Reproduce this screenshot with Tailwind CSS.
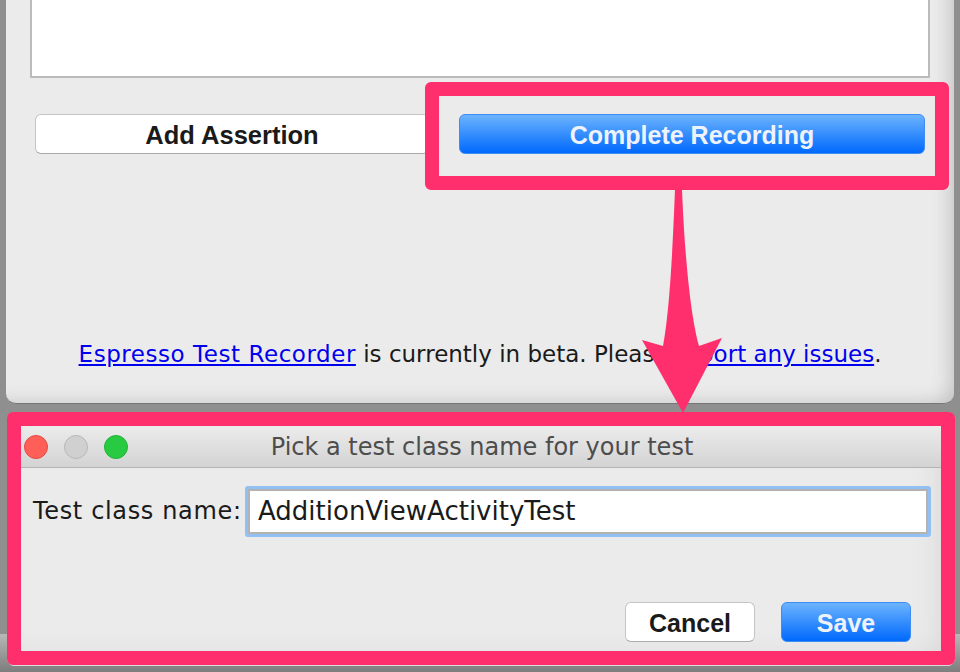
<!DOCTYPE html>
<html>
<head>
<meta charset="utf-8">
<script src="https://cdn.jsdelivr.net/npm/@tailwindcss/browser@4"></script>
</head>
<body class="m-0">
<div class="relative w-[960px] h-[672px] overflow-hidden bg-[linear-gradient(to_bottom,#8f8f8f_0,#8f8f8f_634px,#b8b8b8_634px,#7d7d7d_672px)] font-['DejaVu_Sans',sans-serif] text-[#1a1a1a]">
  <!-- back window -->
  <div class="absolute left-[6px] top-0 w-[948px] h-[404px] bg-[#ebebeb] rounded-b-[10px] border-b border-[#777] flex flex-col px-[24px] shadow-[inset_-14px_-10px_18px_-10px_#c4c4c4]">
    <div class="h-[78px] bg-white border-2 border-t-0 border-[#bbbbbb] shrink-0"></div>
    <div class="flex mt-[36px] h-[40px] shrink-0 pl-[5px]">
      <div class="w-[394px] h-[40px] bg-white rounded-[6px] border border-[#c4c4c4] border-b-[#ababab] flex items-center justify-center pt-[3px] font-['Liberation_Sans',sans-serif] font-bold text-[25.5px]">Add Assertion</div>
      <div class="ml-[30px] w-[466px] h-[40px] rounded-[6px] border border-[#3d8df5] bg-[linear-gradient(to_bottom,#6cb3fd,#0069fd)] flex items-center justify-center pt-[3px] font-['Liberation_Sans',sans-serif] font-bold text-[25px] text-[#eef3fb]">Complete Recording</div>
    </div>
    <p class="mt-[184px] text-center text-[23px] leading-[32px] whitespace-nowrap"><span class="text-[#0000ee] underline tracking-[0.55px]">Espresso Test Recorder</span> is currently in beta. Please <span class="text-[#0000ee] underline">report any issues</span>.</p>
  </div>
  <!-- front window -->
  <div class="absolute left-[7px] top-[412px] w-[948px] h-[254px] bg-[#ebebeb] rounded-[8px] pt-[14px] px-[14px] flex flex-col shadow-[inset_-32px_-24px_28px_-16px_#d8d8d8]">
    <div class="h-[42px] shrink-0 bg-[linear-gradient(to_bottom,#ececec,#d3d3d3)] border-b border-[#b4b4b4] flex items-center relative">
      <div class="flex gap-[16px] pl-[3px]">
        <span class="w-[24px] h-[24px] rounded-full bg-[#ff5f57] border border-[#e5483f]"></span>
        <span class="w-[24px] h-[24px] rounded-full bg-[#d0d0d0] border border-[#b8b8b8]"></span>
        <span class="w-[24px] h-[24px] rounded-full bg-[#28ca42] border border-[#1fb436]"></span>
      </div>
      <span class="absolute left-0 right-0 text-center text-[24px] text-[#4d4d4d] pl-[2px]">Pick a test class name for your test</span>
    </div>
    <div class="flex items-center mt-[19px] pl-[12px] h-[48px] shrink-0">
      <span class="w-[212px] text-[24px] tracking-[0.65px] whitespace-nowrap shrink-0">Test class name:</span>
      <div class="w-[686px] h-[51px] rounded-[3px] border-[3px] border-[#93c0f3] shrink-0">
        <div class="w-full h-full border-2 border-[#b3b3b3] bg-white flex items-center pl-[8px] text-[26px] text-[#1a1a1a]">AdditionViewActivityTest</div>
      </div>
    </div>
    <div class="flex justify-end mt-[67px] pr-[30px] gap-[26px] font-['Liberation_Sans',sans-serif] font-bold text-[25px]">
      <div class="w-[130px] h-[40px] bg-white rounded-[6px] border border-[#c4c4c4] border-b-[#ababab] flex items-center justify-center pt-[3px]">Cancel</div>
      <div class="w-[130px] h-[40px] rounded-[6px] border border-[#3d8df5] bg-[linear-gradient(to_bottom,#6cb3fd,#0069fd)] flex items-center justify-center pt-[3px] text-[#eef3fb]">Save</div>
    </div>
  </div>
  <!-- annotations -->
  <div class="absolute left-[425px] top-[82px] w-[524px] h-[108px] border-[14px] border-[#ff2f6e] rounded-[6px]"></div>
  <div class="absolute left-[7px] top-[412px] w-[948px] h-[253px] border-[14px] border-[#ff2f6e] rounded-[6px]"></div>
  <svg class="absolute left-0 top-0" width="960" height="672" viewBox="0 0 960 672">
    <path d="M675 189 L682 189 C684 240 689 310 699 346 L722 338 L683 413 L642 340 L663 346 C670 310 673 240 675 189 Z" fill="#ff2f6e"/>
  </svg>
</div>
</body>
</html>
